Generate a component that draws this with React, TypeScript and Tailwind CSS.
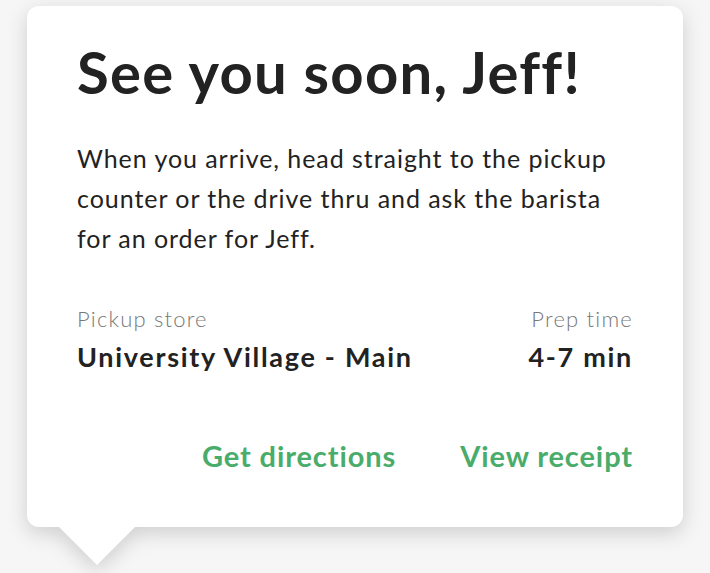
import React from "react";

export default function App() {
  return (
    <div
      className="w-full h-[573px] bg-[#f6f6f6] pt-[6px] px-[27px] overflow-hidden"
      style={{ fontFamily: "Lato, 'Noto Sans', sans-serif" }}
    >
      <div className="relative w-[656px] drop-shadow-[0_6px_10px_rgba(0,0,0,0.16)]">
        <div className="bg-white rounded-[12px] h-[521px] px-[50px] pt-[34px] text-[#222222]">
          <h1 className="text-[58px] leading-[64px] font-bold tracking-[1.3px]">See you soon, Jeff!</h1>
          <p className="mt-[34px] text-[25px] leading-[40px] tracking-[0.95px] w-[545px]">
            When you arrive, head straight to the pickup counter or the drive thru and ask the barista for an order for Jeff.
          </p>
          <div className="mt-[46px] flex justify-between">
            <div>
              <div className="text-[22px] leading-[30px] text-[#787878] font-light tracking-[1.2px]">Pickup store</div>
              <div className="mt-[6px] text-[27px] leading-[34px] font-bold tracking-[1.7px]">University Village - Main</div>
            </div>
            <div className="text-right">
              <div className="text-[22px] leading-[30px] text-[#787878] font-light tracking-[1.2px]">Prep time</div>
              <div className="mt-[6px] text-[27px] leading-[34px] font-bold tracking-[1.7px]">4-7 min</div>
            </div>
          </div>
          <div className="mt-[64px] flex justify-end gap-[64px] text-[29px] leading-[36px] font-bold tracking-[0.9px] text-[#4aac6b]">
            <span>Get directions</span>
            <span>View receipt</span>
          </div>
        </div>
        <svg className="absolute left-[31px] top-[520px]" width="78" height="40" viewBox="0 0 78 40">
          <polygon points="0,0 78,0 39,39" fill="#ffffff" />
        </svg>
      </div>
    </div>
  );
}
